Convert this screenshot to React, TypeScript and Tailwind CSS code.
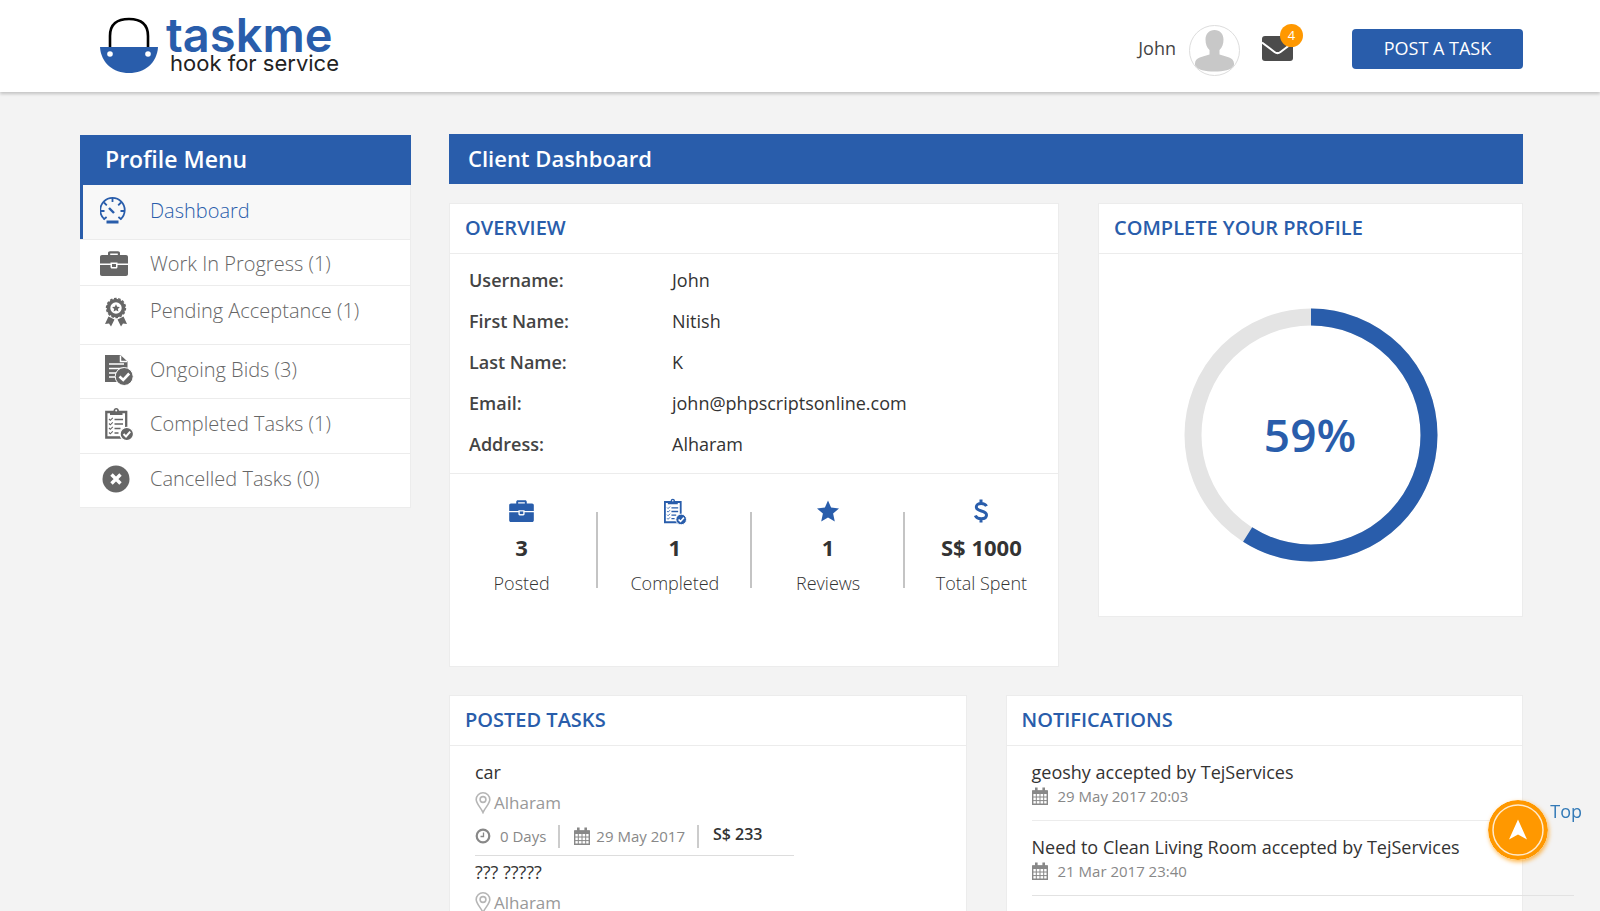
import type { ReactNode } from 'react'

interface IconProps {
  className?: string
}

function Logo() {
  return (
    <a href="#" className="flex items-start text-[#295dab]" aria-label="taskme hook for service">
      <svg viewBox="0 0 60 58" className="w-[60px] h-[58px] mt-4" fill="none">
        <path d="M11 33V20C11 8 18 3 30 3s19 5 19 17v13" stroke="#000" strokeWidth="2.6" />
        <path d="M1 31h58C58 47 46 57 30 57S2 47 1 31Z" fill="#295dab" />
        <circle cx="11" cy="38" r="2.8" fill="#fff" />
        <circle cx="49" cy="38" r="2.8" fill="#fff" />
      </svg>
      <span className="flex flex-col pl-[7px] pt-[15px] font-[Inter,sans-serif]">
        <span className="text-[47px] leading-10 font-semibold">taskme</span>
        <span className="text-[22px] leading-[16px] pl-1 text-[#222]">hook for service</span>
      </span>
    </a>
  )
}

function Gauge() {
  return (
    <svg viewBox="0 0 34 34" className="w-[34px] h-[34px]" fill="none" stroke="currentColor">
      <path d="M4.3 25.2A12.2 12.2 0 1 1 20.7 25.2" strokeWidth="1.8" />
      <path d="M12.5 4v4M0.5 17h4M24.5 17h-4M4 8.5l2.8 2.8M21 8.5l-2.8 2.8M3.6 25.5l3-2.5M21.4 25.5l-3-2.5" strokeWidth="1.8" />
      <path d="M9 14l5 5" strokeWidth="2.4" />
      <path d="M6.5 28h12" strokeWidth="3" />
    </svg>
  )
}

function Briefcase({ className }: IconProps) {
  return (
    <svg viewBox="0 0 28 25" className={className} fill="currentColor">
      <path fillRule="evenodd" d="M8 4V2.2C8 1 8.8.3 10 .3h8c1.200 0 2 .7 2 1.900V4h6c1.200 0 2 .8 2 2v6.600H17.500v-1h-7v1H0V6c0-1.200.8-2 2-2Zm2.200 0h7.600V2.500h-7.600Z" />
      <path d="M0 14h10.500v2c0 .9.5 1.500 1.500 1.500h4c1 0 1.500-.6 1.500-1.500v-2H28v9c0 1.200-.8 2-2 2H2c-1.200 0-2-.8-2-2Z" />
      <path d="M12 13h4v3h-4Z" />
    </svg>
  )
}

function Award() {
  return (
    <svg viewBox="0 0 34 34" className="w-[34px] h-[34px]" fill="currentColor">
      <circle cx="16" cy="14" r="7.5" fill="none" stroke="currentColor" strokeWidth="3.6" />
      <circle cx="16" cy="14" r="9.4" fill="none" stroke="currentColor" strokeWidth="1.6" strokeDasharray="2.6 1.6" />
      <path d="m16 10.200 1.200 2.500 2.700.3-2 1.900.5 2.700-2.400-1.300-2.400 1.300.5-2.700-2-1.900 2.700-.3Z" />
      <path d="m8.500 22.500 6 3-3.500 7-2-3-4 .5ZM23.500 22.500l-6 3 3.500 7 2-3 4 .5Z" />
    </svg>
  )
}

function DocumentCheck() {
  return (
    <svg viewBox="0 0 34 34" className="w-[34px] h-[34px]" fill="none">
      <path d="M5 2h15.500l7 6.500V29H5Z" fill="currentColor" />
      <path d="M20.500 2.500V8.500h6.500M9 11h15M9 15.500h15M9 20h8M9 24h7" stroke="#fff" strokeWidth="1.5" />
      <circle cx="24.2" cy="23.5" r="9" fill="currentColor" stroke="#fff" strokeWidth="1" />
      <path d="m19.500 23.500 3.700 3.500 6-6.500" stroke="#fff" strokeWidth="2.6" />
    </svg>
  )
}

function ClipboardTick({ className }: IconProps) {
  return (
    <svg viewBox="4 0 30 34" className={className} fill="none">
      <path d="M6.300 5h19.900v25.500H6.300Z" stroke="currentColor" strokeWidth="2.3" />
      <path d="M10 8V4h3.500c0-4 5.500-4 5.500 0h3.500v4Z" fill="currentColor" />
      <circle cx="16.2" cy="3.4" r="1" fill="#fff" />
      <path d="M14.500 12.500h8.500M14.500 17h8.500M14.500 21.500h6M14.500 26h4" stroke="currentColor" strokeWidth="1.7" />
      <path d="m9 12 1.300 1.300 2.500-2.500M9 16.500l1.300 1.300 2.500-2.500M9 21l1.300 1.300 2.500-2.500M9 25.500l1.300 1.300 2.500-2.500" stroke="currentColor" strokeWidth="1.1" />
      <circle cx="26.8" cy="27" r="6.7" fill="currentColor" stroke="#fff" strokeWidth="1.2" />
      <path d="m23.500 27 2.500 2.500 4.200-4.800" stroke="#fff" strokeWidth="2" />
    </svg>
  )
}

function CancelCircle() {
  return (
    <svg viewBox="0 0 34 34" className="w-[34px] h-[34px]" fill="none">
      <circle cx="16" cy="17" r="13.5" fill="currentColor" />
      <path d="m11.500 12.500 9 9M20.500 12.500l-9 9" stroke="#fff" strokeWidth="3.4" />
    </svg>
  )
}

function Star() {
  return (
    <svg viewBox="0 0 24 24" className="w-6 h-6" fill="currentColor">
      <path d="m12 1.500 3.100 7.100 7.900.8-5.900 5.200 1.700 7.900L12 18.500l-6.800 4 1.700-7.900L1 9.400l7.900-.8Z" />
    </svg>
  )
}

function Dollar() {
  return (
    <svg viewBox="0 0 14 24" className="w-[14px] h-6" fill="none" stroke="currentColor" strokeWidth="3">
      <path d="M12.500 7.200C11.500 5.200 9.500 4.400 7.200 4.400 4.300 4.400 2.300 5.800 2.300 8c0 5.300 10.200 2.600 10.200 8 0 2.400-2.300 3.700-5.300 3.700-2.700 0-4.900-1-5.900-3.200M7 .5v4M7 19.500v4" />
    </svg>
  )
}

function Pin() {
  return (
    <svg viewBox="0 0 16 22" className="w-4 h-[22px]" fill="none" stroke="#b5b5b5" strokeWidth="1.6">
      <path d="M8 20.500C6 15.500 1.200 12 1.200 7.600a6.800 6.800 0 0 1 13.600 0C14.800 12 10 15.500 8 20.500Z" />
      <circle cx="8" cy="7.5" r="2.9" />
    </svg>
  )
}

function Clock() {
  return (
    <svg viewBox="0 0 16 16" className="w-4 h-4" fill="none" stroke="currentColor">
      <circle cx="8" cy="8" r="6.3" strokeWidth="2.2" />
      <path d="M8.500 4.500V8.500H5.500" strokeWidth="1.3" />
    </svg>
  )
}

function CalendarGrid() {
  return (
    <svg viewBox="0 0 16 18" className="w-4 h-[18px]" fill="none" stroke="currentColor">
      <path d="M.7 4h14.600v13.300H.7Z" strokeWidth="1.4" />
      <path d="M1 4h14v2.500H1Z" fill="currentColor" />
      <path d="M4.300 6.500v11M8 6.500v11M11.700 6.500v11M1 10h14M1 13.600h14" />
      <path d="M4.300.5v4M11.700.5v4" strokeWidth="2.6" />
    </svg>
  )
}

function Avatar() {
  return (
    <span className="w-[51px] h-[51px] rounded-full border border-[#ddd] bg-white overflow-hidden">
      <svg viewBox="0 0 49 49" className="w-full h-full" fill="#c8c8c8">
        <path d="M24.500 4C19 4 15.500 8 15.500 13.500c0 4.500 1.300 8 4 10.500v4.500C13 30.500 5 31.500 5 37.500v3C8 44 15 45.500 24.500 45.500S41 44 44 40.500v-3c0-6-8-7-14.500-9V24c2.700-2.500 4-6 4-10.500C33.500 8 30 4 24.500 4Z" />
      </svg>
    </span>
  )
}

function Envelope() {
  return (
    <svg viewBox="0 0 31 25" className="w-[31px] h-[25px]">
      <rect width="31" height="25" rx="3" fill="#4c4c4c" />
      <path d="M0 6.500 12.500 16c2 1.500 4 1.500 6 0L31 6.500" fill="none" stroke="#fff" strokeWidth="2" />
    </svg>
  )
}

const menuItems = [
  { label: 'Dashboard', icon: <Gauge />, row: 'h-[54px] pb-[3px] pl-[17px] bg-[#f8f8f8] border-l-3 border-[#295dab] text-[#295dab]' },
  { label: 'Work In Progress (1)', icon: <span className="w-[34px]"><Briefcase className="w-7 h-[25px]" /></span>, row: 'h-[46px] pt-[3px] pl-5' },
  { label: 'Pending Acceptance (1)', icon: <Award />, row: 'h-[59px] pb-2 pl-5' },
  { label: 'Ongoing Bids (3)', icon: <DocumentCheck />, row: 'h-[54px] pb-[2px] pl-5' },
  { label: 'Completed Tasks (1)', icon: <span className="w-[34px] flex justify-end"><ClipboardTick className="w-[30px] h-[34px]" /></span>, row: 'h-[55px] pb-[3px] pl-5' },
  { label: 'Cancelled Tasks (0)', icon: <CancelCircle />, row: 'h-[54px] pb-[3px] pl-5' },
]

const details = [
  { label: 'Username:', value: 'John' },
  { label: 'First Name:', value: 'Nitish' },
  { label: 'Last Name:', value: 'K' },
  { label: 'Email:', value: 'john@phpscriptsonline.com' },
  { label: 'Address:', value: 'Alharam' },
]

const stats = [
  { icon: <Briefcase className="w-[25px] h-[22px]" />, value: '3', label: 'Posted' },
  { icon: <ClipboardTick className="w-6 h-[27px]" />, value: '1', label: 'Completed' },
  { icon: <Star />, value: '1', label: 'Reviews' },
  { icon: <Dollar />, value: 'S$ 1000', label: 'Total Spent' },
]

const tasks = [
  { title: 'car', place: 'Alharam', days: '0 Days', date: '29 May 2017', price: 'S$ 233' },
  { title: '??? ?????', place: 'Alharam', days: '0 Days', date: '29 May 2017', price: 'S$ 233' },
]

const notifications = [
  { title: 'geoshy accepted by TejServices', date: '29 May 2017 20:03' },
  { title: 'Need to Clean Living Room accepted by TejServices', date: '21 Mar 2017 23:40' },
]

function Card({ title, className, children }: { title: string; className?: string; children: ReactNode }) {
  return (
    <section className={`bg-white border border-[#ececec] ${className ?? ''}`}>
      <h2 className="h-[50px] pl-[15px] border-b border-[#ececec] text-[20px] leading-[48px] font-semibold text-[#295dab]">
        {title}
      </h2>
      {children}
    </section>
  )
}

function ProfileRing({ percent }: { percent: number }) {
  const circumference = 2 * Math.PI * 118
  return (
    <svg viewBox="0 0 254 254" className="w-[254px] h-[254px]" fill="none" strokeWidth="17">
      <circle cx="127" cy="127" r="118" stroke="#e4e4e4" />
      <circle
        cx="127"
        cy="127"
        r="118"
        stroke="#295dab"
        strokeDasharray={`${(circumference * percent) / 100} ${circumference}`}
        transform="rotate(-90 127 127)"
      />
      <text x="126" y="144" textAnchor="middle" fill="#295dab" stroke="none" className="text-[46px] font-semibold">
        {percent}%
      </text>
    </svg>
  )
}

export default function App() {
  return (
    <div className="min-h-screen bg-[#f3f3f3] font-['Open_Sans',sans-serif] text-[#333]">
      <header className="flex justify-between h-[92px] pl-[99px] pr-[77px] bg-white shadow-[0_2px_3px_rgba(0,0,0,0.2)]">
        <Logo />
        <div className="flex items-center h-[97px]">
          <span className="text-[18px] text-[#444]">John</span>
          <span className="flex pl-[13px] pt-1"><Avatar /></span>
          <a href="#" className="relative ml-[22px]" aria-label="Messages">
            <Envelope />
            <span className="absolute -top-3 left-[18px] w-[23px] h-[23px] rounded-full bg-[#ff9800] text-white text-[13px] leading-[22px] text-center">
              4
            </span>
          </a>
          <button className="w-[171px] h-10 ml-[59px] rounded bg-[#295dab] text-white text-[18px]">POST A TASK</button>
        </div>
      </header>

      <div className="flex items-start gap-[38px] pl-20 pr-[77px] pt-[42px]">
        <aside className="w-[331px] shrink-0 mt-px bg-white">
          <h2 className="h-[50px] pl-[25px] bg-[#295dab] text-white text-[23px] leading-[48px] font-semibold">Profile Menu</h2>
          <nav className="border-r border-[#ececec]">
            {menuItems.map(item => (
              <a key={item.label} href="#" className="block border-b border-[#ececec] -mb-px last:mb-0 text-[#666]">
                <span className={`flex items-center ${item.row}`}>
                  {item.icon}
                  <span className="pl-4 text-[20px] font-light">{item.label}</span>
                </span>
              </a>
            ))}
          </nav>
        </aside>

        <main className="flex-1 min-w-0">
          <h1 className="h-[50px] pl-[19px] bg-[#295dab] text-white text-[22px] leading-[48px] font-semibold">Client Dashboard</h1>

          <div className="flex items-start gap-[39px] mt-[19px]">
            <Card title="OVERVIEW" className="flex-1 h-[464px]">
              <dl className="grid grid-cols-[203px_1fr] pl-[19px] pt-[6px] pb-2 text-[18px] leading-[41px] pr-4">
                {details.map(d => (
                  <div key={d.label} className="contents">
                    <dt className="font-semibold text-[#444]">{d.label}</dt>
                    <dd>{d.value}</dd>
                  </div>
                ))}
              </dl>
              <div className="border-t border-[#ececec] pt-[22px]">
                <ul className="grid grid-cols-4 -ml-[5px]">
                  {stats.map(s => (
                    <li key={s.label} className="flex flex-col items-center relative not-last:after:absolute not-last:after:right-0 not-last:after:top-4 not-last:after:h-[76px] not-last:after:w-[2px] not-last:after:bg-[#c4c4c4]">
                      <span className="flex items-center h-[30px] text-[#295dab]">{s.icon}</span>
                      <strong className="text-[22px] leading-[42px] font-bold">{s.value}</strong>
                      <span className="text-[18px] leading-[30px] font-light">{s.label}</span>
                    </li>
                  ))}
                </ul>
              </div>
            </Card>
            <Card title="COMPLETE YOUR PROFILE" className="w-[425px] shrink-0">
              <div className="flex justify-center pt-[54px] pb-[54px]">
                <ProfileRing percent={59} />
              </div>
            </Card>
          </div>

          <div className="grid grid-cols-2 gap-[39px] mt-[28px]">
            <Card title="POSTED TASKS">
              <ul className="pl-[25px] pt-[10px]">
                {tasks.map(t => (
                  <li key={t.title} className="w-[319px] border-b border-[#ddd] pt-[2px] pb-[3px]">
                    <h3 className="text-[18px] leading-7">{t.title}</h3>
                    <p className="flex items-center gap-[3px] text-[17px] leading-[34px] text-[#999]">
                      <Pin /> {t.place}
                    </p>
                    <div className="flex items-center h-8 text-[15px] text-[#888]">
                      <Clock />
                      <span className="pl-[9px]">{t.days}</span>
                      <span className="w-[2px] h-[23px] ml-3 mr-[14px] bg-[#ccc]" />
                      <CalendarGrid />
                      <span className="pl-[6px]">{t.date}</span>
                      <span className="w-[2px] h-[23px] ml-3 mr-[14px] bg-[#ccc]" />
                      <span className="pb-1 text-[16px] font-semibold text-[#333]">{t.price}</span>
                    </div>
                  </li>
                ))}
              </ul>
            </Card>
            <Card title="NOTIFICATIONS">
              <ul className="pl-[25px]">
                {notifications.map(n => (
                  <li key={n.title} className="h-[75px] pt-3 border-b border-[#ececec] last:-mr-[52px] last:border-[#e2e2e2]">
                    <h3 className="text-[18px] leading-7">{n.title}</h3>
                    <p className="flex items-center gap-[10px] text-[15px] leading-5 text-[#888]">
                      <CalendarGrid /> {n.date}
                    </p>
                  </li>
                ))}
              </ul>
            </Card>
          </div>
        </main>
      </div>

      <a href="#" className="fixed bottom-[51px] right-[18px] flex items-start gap-[2px] text-[18px] leading-[22px] text-[#337ab7]">
        <svg viewBox="0 0 60 60" className="w-[60px] h-[60px] rounded-full shadow-[1px_2px_4px_rgba(255,152,0,0.7)]" fill="#ff9800">
          <circle cx="30" cy="30" r="30" />
          <circle cx="30" cy="30" r="25" fill="none" stroke="#fff" strokeOpacity="0.8" strokeWidth="1.5" />
          <path d="m30 19.500 9 20-9-5-9 5Z" fill="#fff" />
        </svg>
        Top
      </a>
    </div>
  )
}
